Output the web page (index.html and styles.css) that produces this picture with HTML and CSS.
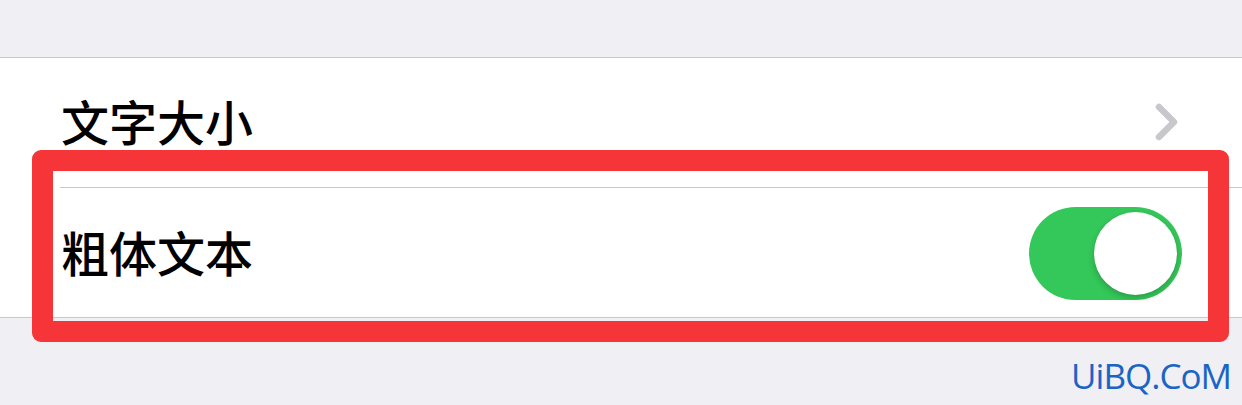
FILE: index.html
```html
<!DOCTYPE html>
<html lang="zh-CN">
<head>
    <meta charset="UTF-8">
    <meta name="viewport" content="width=device-width, initial-scale=1.0">
    <title>显示与文字大小</title>
    <link rel="stylesheet" href="styles.css">
</head>
<body>
    <main class="settings">
        <!-- Text settings group -->
        <div class="group">
            <div class="row">
                <div class="row-inner">
                    <span class="label">文字大小</span>
                    <svg class="chevron" width="24" height="38" viewBox="0 0 24 38">
                        <path d="M4 4 L19 19 L4 34" fill="none" stroke="#c7c7cc" stroke-width="6.5" stroke-linecap="round" stroke-linejoin="round"/>
                    </svg>
                </div>
            </div>
            <div class="row">
                <div class="row-inner divided">
                    <span class="label">粗体文本</span>
                    <div class="switch on">
                        <div class="knob"></div>
                    </div>
                </div>
            </div>
        </div>

        <!-- Highlight frame -->
        <div class="highlight"></div>
    </main>

    <div class="watermark">UiBQ.CoM</div>
</body>
</html>
```

FILE: styles.css
```css
* {
    margin: 0;
    padding: 0;
    box-sizing: border-box;
}

:root {
    --page-bg: #efeff4;
    --line: #c8c7cc;
    --text: #000000;
    --green: #34c759;
    --red: #f53538;
    --blue: #1a64c4;
}

body {
    background-color: var(--page-bg);
    font-family: "Noto Sans CJK SC", "Noto Sans", sans-serif;
    color: var(--text);
    width: 1242px;
    height: 405px;
    overflow: hidden;
    position: relative;
}

.settings {
    padding-top: 57px;
    position: relative;
}

/* Group */
.group {
    background-color: #ffffff;
    border-top: 1px solid var(--line);
    border-bottom: 1px solid var(--line);
}

.row {
    padding-left: 60px;
}

.row-inner {
    height: 129px;
    display: flex;
    align-items: center;
    justify-content: space-between;
    padding-right: 60px;
}

.row-inner.divided {
    height: 130px;
    border-top: 1px solid var(--line);
    padding-top: 2px;
}

.label {
    font-size: 48px;
    font-weight: 500;
    line-height: 1;
    padding-left: 1px;
    margin-bottom: 5px;
}

.chevron {
    display: block;
    margin-right: 3px;
    margin-top: -2px;
}

/* Switch */
.switch {
    width: 153px;
    height: 93px;
    border-radius: 47px;
    background-color: #e5e5ea;
    position: relative;
}

.switch.on {
    background-color: var(--green);
}

.switch .knob {
    position: absolute;
    top: 5px;
    right: 5px;
    width: 83px;
    height: 83px;
    border-radius: 50%;
    background-color: #ffffff;
    box-shadow: 0 3px 6px rgba(0,0,0,0.2), 0 0 1px rgba(0,0,0,0.15);
}

/* Red highlight frame */
.highlight {
    position: absolute;
    left: 32px;
    top: 150px;
    width: 1197px;
    height: 192px;
    border: 21px solid var(--red);
    border-radius: 9px;
}

/* Watermark */
.watermark {
    position: absolute;
    right: 11px;
    bottom: 6px;
    font-family: "Open Sans", sans-serif;
    font-size: 35px;
    color: var(--blue);
    letter-spacing: -1px;
}
```
